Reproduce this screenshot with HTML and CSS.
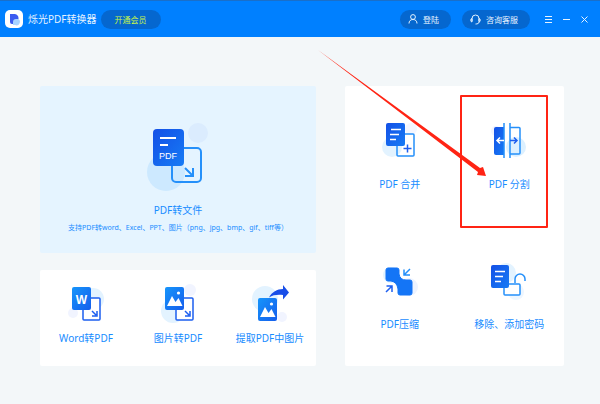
FILE: index.html
```html
<!DOCTYPE html>
<html lang="zh-CN">
<head>
  <meta charset="UTF-8">
  <meta name="viewport" content="width=device-width, initial-scale=1.0">
  <title>烁光PDF转换器</title>
  <link rel="stylesheet" href="styles.css">
</head>
<body>
  <!-- shared gradients -->
  <svg class="defs" width="0" height="0" aria-hidden="true">
    <defs>
      <linearGradient id="deep" x1="0" y1="0" x2="1" y2="1">
        <stop offset="0" stop-color="#1450e6"/>
        <stop offset="1" stop-color="#167bf5"/>
      </linearGradient>
      <linearGradient id="light" x1="0" y1="0" x2="1" y2="1">
        <stop offset="0" stop-color="#1695fb"/>
        <stop offset="1" stop-color="#155eec"/>
      </linearGradient>
    </defs>
  </svg>

  <header class="titlebar">
    <svg class="logo" width="18" height="18" viewBox="0 0 18 18" aria-hidden="true">
      <rect width="18" height="18" rx="5" fill="#fff"/>
      <path d="M5 4h5a4 4 0 0 1 3 6H10v4H7a2 2 0 0 1-2-2z" fill="#3c5cf0"/>
      <path d="M8 12a3 3 0 0 1 3-3h2a3 3 0 0 1-3 6H8z" fill="#a9d4ff"/>
    </svg>
    <h1 class="app-name">烁光PDF转换器</h1>
    <button class="pill vip">开通会员</button>

    <div class="actions">
      <button class="pill">
        <svg width="10" height="10" viewBox="0 0 10 10" aria-hidden="true">
          <circle cx="5" cy="3" r="2.4"/>
          <path d="M1 9.5C1 7 2.5 5.5 5 5.5S9 7 9 9.5"/>
        </svg>
        登陆
      </button>
      <button class="pill">
        <svg width="11" height="11" viewBox="0 0 11 11" aria-hidden="true">
          <path d="M2 7V4.5a3.5 3.5 0 0 1 7 0V7M2 4.5C.3 4.5.3 8 2 8zM9 4.5c1.7 0 1.7 3.5 0 3.5zM9 8c0 1.5-1.5 2-3.5 2"/>
        </svg>
        咨询客服
      </button>
    </div>

    <div class="window-controls">
      <button aria-label="菜单"><svg width="7" height="7" viewBox="0 0 7 7"><path d="M0 .5h7M0 3.5h7M0 6.5h7"/></svg></button>
      <button aria-label="最小化"><svg width="7" height="7" viewBox="0 0 7 7"><path d="M0 3.5h7"/></svg></button>
      <button aria-label="关闭"><svg width="7" height="7" viewBox="0 0 7 7"><path d="M.5 .5l6 6M6.5 .5l-6 6"/></svg></button>
    </div>
  </header>

  <main class="content">
    <div class="left">
      <button class="card main-card">
        <svg width="62" height="70" viewBox="0 0 62 70" aria-hidden="true">
          <circle cx="19" cy="50" r="19" fill="#cde9ff"/>
          <circle cx="51" cy="11" r="10" fill="#dbecfe"/>
          <rect x="25" y="26" width="29" height="34" rx="4" class="line thick"/>
          <rect x="6" y="7" width="31" height="37" rx="4" fill="url(#deep)"/>
          <path d="M13 16h16M13 23h8" class="white thick"/>
          <text x="21" y="37" class="doc-text">PDF</text>
          <path d="M38 46l8 8M46 46v8h-8" class="line thick"/>
        </svg>
        <span class="label">PDF转文件</span>
        <span class="formats">支持PDF转word、Excel、PPT、图片（png、jpg、bmp、gif、tiff等）</span>
      </button>

      <div class="card small-cards">
        <button class="tile">
          <svg width="44" height="40" viewBox="0 0 44 40" aria-hidden="true">
            <circle cx="29" cy="15" r="11" fill="#e3f3ff"/>
            <circle cx="9" cy="29" r="5" fill="#f1f4ff"/>
            <rect x="19" y="14" width="17" height="22" rx="1" class="line dark back"/>
            <rect x="8" y="3" width="19" height="23" rx="2" fill="url(#light)"/>
            <text x="17.5" y="20" class="word-text">W</text>
            <path d="M28 27l4 4M33 27v5h-5" class="line dark"/>
          </svg>
          <span class="label">Word转PDF</span>
        </button>
        <button class="tile">
          <svg width="44" height="40" viewBox="0 0 44 40" aria-hidden="true">
            <circle cx="17" cy="27" r="12" fill="#e3f3ff"/>
            <circle cx="34" cy="6" r="6" fill="#f1f4ff"/>
            <rect x="20" y="14" width="17" height="22" rx="1" class="line dark back"/>
            <rect x="9" y="3" width="19" height="23" rx="2" fill="url(#light)"/>
            <path d="M11 22l5-10 3.5 6 3-4 4 8z" fill="#fff"/>
            <circle cx="22.5" cy="9" r="1.6" fill="#fff"/>
            <path d="M29 27l4 4M34 27v5h-5" class="line dark"/>
          </svg>
          <span class="label">图片转PDF</span>
        </button>
        <button class="tile">
          <svg width="44" height="40" viewBox="0 0 44 40" aria-hidden="true">
            <circle cx="17" cy="15" r="13" fill="#e3f3ff"/>
            <circle cx="34" cy="33" r="5" fill="#f1f4ff"/>
            <rect x="10" y="14" width="19" height="23" rx="2" fill="url(#light)"/>
            <path d="M12 33l5-10 3.5 6 3-4 4 8z" fill="#fff"/>
            <circle cx="23.5" cy="20" r="1.6" fill="#fff"/>
            <path d="M21 13.5C24 8 29 5 35 5V1l6 7.5-6 7V11c-6-.5-10 0-14 2.5z" fill="#184ee8"/>
          </svg>
          <span class="label">提取PDF中图片</span>
        </button>
      </div>
    </div>

    <div class="card tools">
      <button class="tile">
        <svg width="44" height="40" viewBox="0 0 44 40" aria-hidden="true">
          <circle cx="14" cy="26" r="10" fill="#e3f3ff"/>
          <circle cx="33" cy="8" r="6" fill="#f4f6ff"/>
          <rect x="19" y="13" width="17" height="22" rx="1" class="line"/>
          <rect x="8" y="2" width="19" height="23" rx="2" fill="url(#deep)"/>
          <path d="M13 8.5h10M12 13.5h9M12 18.5h6" class="white"/>
          <path d="M29.5 23.5v8M25.5 27.5h8" class="line dark"/>
        </svg>
        <span class="label">PDF 合并</span>
      </button>
      <button class="tile">
        <svg width="44" height="40" viewBox="0 0 44 40" aria-hidden="true">
          <circle cx="29" cy="26" r="10" fill="#dcf0ff"/>
          <circle cx="9" cy="10" r="5" fill="#f1f4ff"/>
          <path d="M17 6H9a2 2 0 0 0-2 2v24a2 2 0 0 0 2 2h8z" fill="url(#deep)"/>
          <path d="M17 2v35M23 2v35M23 6.5h9a1 1 0 0 1 1 1v24.5a1 1 0 0 1-1 1h-9" class="line"/>
          <path d="M17 19.5h-7M13 16.5l-3 3 3 3" class="white"/>
          <path d="M23 19.5h7M27 16.5l3 3-3 3" class="line dark"/>
        </svg>
        <span class="label">PDF 分割</span>
        <span class="highlight"></span>
        <svg class="pointer" width="170" height="128" viewBox="0 0 170 128" aria-hidden="true">
          <path d="M1 1L163 119 166 118 169 127 160 126 161 123z" fill="#ff2414"/>
        </svg>
      </button>
      <button class="tile">
        <svg width="44" height="40" viewBox="0 0 44 40" aria-hidden="true">
          <circle cx="13" cy="14" r="8" fill="#e3f3ff"/>
          <circle cx="31" cy="26" r="9" fill="#edf3ff"/>
          <path d="M10 7h9a2 2 0 0 1 2 2v4q1 6 7 6h4a2 2 0 0 1 2 2v11a2 2 0 0 1-2 2H22a2 2 0 0 1-2-2v-4q-1-7-7-8h-3a2 2 0 0 1-2-2V9a2 2 0 0 1 2-2z" fill="#1475f6" stroke="#1475f6"/>
          <path d="M32 8l-6 6M26 8.5V14h6" class="line"/>
          <path d="M8 31l6-6M8.5 25H14v6" class="line dark"/>
        </svg>
        <span class="label">PDF压缩</span>
      </button>
      <button class="tile">
        <svg width="44" height="40" viewBox="0 0 44 40" aria-hidden="true">
          <circle cx="19" cy="12" r="10" fill="#e3f3ff"/>
          <circle cx="29" cy="31" r="8" fill="#edf6ff"/>
          <rect x="17" y="23" width="16" height="11" rx="1" class="line back"/>
          <path d="M28 22v-4a5 5 0 0 1 10 0v2" class="line"/>
          <rect x="4" y="4" width="18" height="23" rx="2" fill="url(#deep)"/>
          <path d="M8 10.5h10M8 15.5h8M8 20.5h6" class="white"/>
        </svg>
        <span class="label">移除、添加密码</span>
      </button>
    </div>
  </main>
</body>
</html>
```

FILE: styles.css
```css
* {
  box-sizing: border-box;
}

body {
  margin: 0;
  min-height: 100vh;
  background-color: #f3f7f9;
  font-family: "Noto Sans", "Noto Sans CJK SC", sans-serif;
  font-size: 10px;
}

button {
  margin: 0;
  padding: 0;
  border: none;
  background: none;
  font: inherit;
  color: inherit;
  cursor: pointer;
}

.defs {
  position: absolute;
}

/* title bar */
.titlebar {
  display: flex;
  align-items: center;
  height: 37px;
  padding: 0 12px 0 5px;
  border-top: 1px solid #1a6fc9;
  background-color: #0080ff;
  color: #e6f3ff;
}

.app-name {
  margin: 0 4px 0 5px;
  font-size: 10px;
  font-weight: normal;
  line-height: 16px;
}

.pill {
  display: flex;
  align-items: center;
  gap: 5px;
  height: 19px;
  padding: 0 12px 0 8px;
  border-radius: 10px;
  background-color: #0567cf;
  font-size: 8px;
}

.pill svg,
.window-controls svg {
  fill: none;
  stroke: #e6f3ff;
  stroke-width: 1;
}

.vip {
  padding: 0 14px;
  color: #c9f545;
}

.actions {
  display: flex;
  gap: 11px;
  margin-left: auto;
}

.window-controls {
  display: flex;
  gap: 11px;
  margin-left: 15px;
}

.window-controls button {
  display: flex;
}

/* content */
.content {
  display: grid;
  grid-template-columns: 276fr 219fr;
  gap: 29px;
  padding: 49px 36px 38px 40px;
  color: #188cff;
}

.left {
  display: flex;
  flex-direction: column;
  gap: 17px;
}

.card {
  border-radius: 2px;
  background-color: #fff;
}

.main-card {
  display: flex;
  flex-direction: column;
  align-items: center;
  padding: 36px 0 19px;
  background-color: #e5f4ff;
}

.main-card .label {
  margin-top: 10px;
}

.label {
  line-height: 16px;
  white-space: nowrap;
}

.formats {
  margin-top: 4px;
  font-size: 7px;
  line-height: 12px;
}

.tile {
  position: relative;
  display: flex;
  flex-direction: column;
  align-items: center;
}

.small-cards {
  display: grid;
  grid-template-columns: repeat(3, 1fr);
  padding: 14px 0 20px;
}

.small-cards .tile {
  gap: 6px;
}

.tools {
  display: grid;
  grid-template-columns: 1fr 1fr;
}

.tools .tile {
  gap: 15px;
  padding: 35px 0 34px;
}

/* marked tool */
.highlight {
  position: absolute;
  inset: 9px 16px -2px 5px;
  border: 2px solid #ff2414;
  border-radius: 1px;
}

.pointer {
  position: absolute;
  top: -37px;
  left: -138px;
  pointer-events: none;
}

/* icon strokes */
.line,
.white {
  fill: none;
  stroke: #2590fa;
  stroke-width: 1.5;
}

.dark {
  stroke: #1d5ff0;
}

.line.back {
  fill: #fff;
}

.white {
  stroke: #fff;
}

.thick {
  stroke-width: 2;
}

.doc-text,
.word-text {
  fill: #fff;
  font-family: "Liberation Sans", Arial, sans-serif;
  font-size: 9px;
  text-anchor: middle;
}

.word-text {
  font-size: 12px;
  font-weight: bold;
}
```
